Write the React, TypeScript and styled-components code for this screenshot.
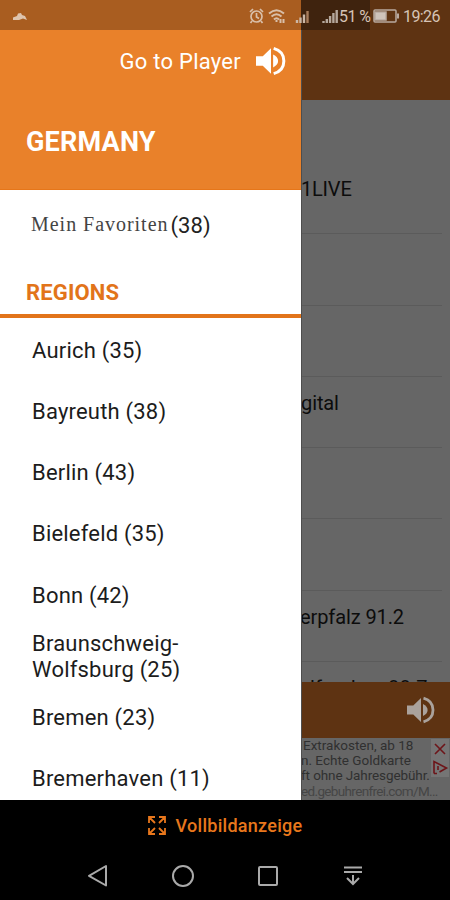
import React from 'react';
import styled, { createGlobalStyle } from 'styled-components';

const Global = createGlobalStyle`
  body { margin: 0; background: #000; font-family: Roboto, "Liberation Sans", sans-serif; }
  * { box-sizing: border-box; }
`;

const Screen = styled.div`
  position: relative;
  width: 450px;
  height: 900px;
  overflow: hidden;
  display: grid;
  grid-template-rows: 800px 52px 48px;
  background: #000;
`;

const StatusBar = styled.div`
  position: absolute;
  top: 0;
  left: 0;
  width: 450px;
  height: 30px;
  display: flex;
  align-items: center;
  padding: 2px 9px 0 12px;
  color: #d6c4b6;
  font-size: 16px;
  background: linear-gradient(90deg, #a95d20 301px, #3f230e 301px, #3f230e 370px, #5e3312 370px);
  svg { display: block; flex: none; }
`;

const Spacer = styled.div`
  flex: 1;
`;

const StatusIcon = styled.svg<{ $gap: number }>`
  margin-right: ${p => p.$gap}px;
`;

const StatusText = styled.span<{ $width: number; $spacing?: number }>`
  width: ${p => p.$width}px;
  letter-spacing: ${p => p.$spacing ?? 0}px;
  white-space: nowrap;
`;

const Main = styled.div`
  display: grid;
  grid-template-columns: 301px 149px;
  min-height: 0;
`;

const Drawer = styled.aside`
  background: #fff;
  overflow: hidden;
`;

const DrawerHeader = styled.header`
  height: 190px;
  padding: 42px 15px 0 26px;
  background: #e9812a;
  border-bottom: 1px solid #e67619;
  color: #fff;
`;

const PlayerLink = styled.div`
  display: flex;
  justify-content: flex-end;
  align-items: center;
  gap: 15px;
  height: 38px;
  font-size: 22px;
  letter-spacing: 0.26px;
`;

const Country = styled.h1`
  margin: 43px 0 0;
  font-size: 27px;
  line-height: 38px;
  font-weight: 700;
  letter-spacing: 0.2px;
`;

const Favorites = styled.div`
  display: flex;
  align-items: center;
  height: 70px;
  padding-left: 31px;
  color: #222;
  font-size: 22px;
  letter-spacing: 0.1px;
`;

const SerifLabel = styled.span`
  font-family: "Liberation Serif", serif;
  font-size: 20px;
  letter-spacing: 0.97px;
  margin: -2px 2px 0 0;
  color: #444;
`;

const SectionTitle = styled.h2`
  height: 58px;
  margin: 0;
  padding: 18px 0 0 26px;
  border-bottom: 4px solid #e2741a;
  color: #e2741a;
  font-size: 22px;
  line-height: 30px;
  font-weight: 700;
  letter-spacing: 0.15px;
`;

const Region = styled.div`
  display: flex;
  align-items: center;
  height: 61.25px;
  width: 240px;
  padding: 4px 0 0 32px;
  font-size: 22px;
  line-height: 26px;
  letter-spacing: 0.2px;
  color: #1c1c1c;
`;

const Backdrop = styled.div`
  display: grid;
  grid-template-rows: 100px 582px 56px 62px;
  overflow: hidden;
  background: #666;
  border-left: 1px solid #4e4e4e;
`;

const AppBar = styled.div`
  background: #5e3312;
`;

const Stations = styled.div`
  padding: 63px 8px 0 0;
  overflow: hidden;
`;

const Station = styled.div`
  height: 71.3px;
  padding-top: 13px;
  border-bottom: 1px solid #5b5b5b;
  font-size: 20px;
  line-height: 26px;
  color: #0c0c0c;
  white-space: nowrap;
`;

const StationName = styled.span<{ $shift: number; $spacing: number }>`
  display: block;
  margin-left: ${p => p.$shift}px;
  letter-spacing: ${p => p.$spacing}px;
`;

const PlayerBar = styled.div`
  display: flex;
  align-items: center;
  justify-content: flex-end;
  padding-right: 15px;
  background: #5e3312;
`;

const Ad = styled.div`
  display: flex;
  justify-content: space-between;
  overflow: hidden;
`;

const AdCopy = styled.div`
  flex: 1;
  min-width: 0;
  font-size: 13.5px;
  line-height: 15.2px;
  white-space: nowrap;
`;

const AdLine = styled.div<{ $shift?: number; $spacing?: number; $muted?: boolean }>`
  margin-left: ${p => p.$shift ?? 0}px;
  letter-spacing: ${p => p.$spacing ?? 0}px;
  color: ${p => (p.$muted ? '#454545' : '#303030')};
`;

const AdControls = styled.div`
  width: 18px;
  height: 38px;
  margin: 1px 1px 0 0;
  background: #757575;
`;

const FullscreenBar = styled.div`
  display: flex;
  justify-content: center;
  align-items: center;
  gap: 10px;
  padding-bottom: 1px;
  color: #e8771c;
  font-size: 18px;
  font-weight: 500;
  letter-spacing: 0.27px;
`;

const NavBar = styled.nav`
  display: grid;
  grid-template-columns: repeat(4, 85px);
  justify-content: center;
  align-items: center;
  justify-items: center;
`;

const Speaker = ({ color, size }: { color: string; size: number }) => (
  <svg width={size} height={size} viewBox="0 0 28 28" fill={color}>
    <path d="M0 9.500h6.300L14 2v24l-7.700-7.500H0z" />
    <path d="M16 8c3 1.600 4.600 3.500 4.600 6S19 18.500 16 20z" />
    <path d="M16.500 2.200C23 4 26 8.600 26 14s-3 10-9.500 11.800" fill="none" stroke={color} strokeWidth="2.800" />
  </svg>
);

const stations = [
  { name: '1LIVE', shift: -1, spacing: -0.2 },
  { name: '', shift: 0, spacing: 0 },
  { name: '', shift: 0, spacing: 0 },
  { name: 'gital', shift: -1, spacing: -0.1 },
  { name: '', shift: 0, spacing: 0 },
  { name: '', shift: 0, spacing: 0 },
  { name: 'erpfalz 91.2', shift: -2, spacing: -0.1 },
  { name: 'lfranken 88.7', shift: 8, spacing: 0.15 },
];

const regions = [
  'Aurich (35)',
  'Bayreuth (38)',
  'Berlin (43)',
  'Bielefeld (35)',
  'Bonn (42)',
  'Braunschweig-Wolfsburg (25)',
  'Bremen (23)',
  'Bremerhaven (11)',
];

export default function App() {
  return (
    <Screen>
      <Global />
      <Main>
        <Drawer>
          <DrawerHeader>
            <PlayerLink>
              <span>Go to Player</span>
              <Speaker color="#fff" size={30} />
            </PlayerLink>
            <Country>GERMANY</Country>
          </DrawerHeader>
          <Favorites>
            <SerifLabel>Mein Favoriten</SerifLabel>
            <span>(38)</span>
          </Favorites>
          <SectionTitle>REGIONS</SectionTitle>
          {regions.map(r => (
            <Region key={r}>{r}</Region>
          ))}
        </Drawer>
        <Backdrop>
          <AppBar />
          <Stations>
            {stations.map((s, i) => (
              <Station key={i}>
                <StationName $shift={s.shift} $spacing={s.spacing}>{s.name}</StationName>
              </Station>
            ))}
          </Stations>
          <PlayerBar>
            <Speaker color="#aaa29c" size={28} />
          </PlayerBar>
          <Ad>
            <AdCopy>
              <AdLine $shift={1}>Extrakosten, ab 18</AdLine>
              <AdLine $shift={-1}>n. Echte Goldkarte</AdLine>
              <AdLine $shift={-1} $spacing={-0.1}>ft ohne Jahresgebühr.</AdLine>
              <AdLine $shift={-1} $spacing={-0.65} $muted>ed.gebuhrenfrei.com/M...</AdLine>
            </AdCopy>
            <AdControls>
              <svg width="18" height="38" fill="none" stroke="#6d1519" strokeWidth="1.600">
                <path d="M4 5l10 10M14 5L4 15" />
                <path d="M3 34.500v-12l12.500 6.500-7 4M3 34.500h3M7 27v4" />
              </svg>
            </AdControls>
          </Ad>
        </Backdrop>
      </Main>
      <FullscreenBar>
        <svg width="18" height="19" viewBox="0 0 18 19" fill="none" stroke="#e8771c" strokeWidth="1.800">
          <path d="M1 7V1h6M1 1l6 6M11 1h6v6M17 1l-6 6M1 12v6h6M1 18l6-6M17 12v6h-6M17 18l-6-6" />
        </svg>
        <span>Vollbildanzeige</span>
      </FullscreenBar>
      <NavBar>
        <svg width="22" height="24" fill="none" stroke="#aaa" strokeWidth="2">
          <path d="M19 2v19.500L2 11.800z" strokeLinejoin="round" />
        </svg>
        <svg width="24" height="24" fill="none" stroke="#aaa" strokeWidth="2">
          <circle cx="12" cy="12" r="10" />
        </svg>
        <svg width="22" height="22" fill="none" stroke="#aaa" strokeWidth="2">
          <rect x="2" y="2" width="18" height="18" rx="1" />
        </svg>
        <svg width="20" height="22" fill="none" stroke="#aaa" strokeWidth="2">
          <path d="M1 2.500h18M1 7h18M10 10v9M4 13l6 6 6-6" />
        </svg>
      </NavBar>
      <StatusBar>
        <svg width="16" height="9" fill="#dec4ae">
          <path d="M1 5.500l4-1.500L6 1.500 9 1l1 2 3 1 2 4-4-1.500L7 8H1z" />
        </svg>
        <Spacer />
        <StatusIcon $gap={4} width="15" height="16" fill="none" stroke="#d9bfa9" strokeWidth="1.700">
          <circle cx="7.500" cy="8.500" r="5.500" />
          <path d="M7.500 5v4l2.500 1.500M1 4l3-3M14 4l-3-3M3 13l-1.500 2M12 13l1.500 2" />
        </StatusIcon>
        <StatusIcon $gap={9} width="18" height="16" fill="none" stroke="#d9bfa9" strokeWidth="2">
          <path d="M1 5.500Q8.500-1 16 5.500M3.500 8.500Q8.500 4 13.500 8.500M6 11.500Q8.500 9 11 11.500M8.500 12v2M12.500 11v4M15.500 11v4" />
        </StatusIcon>
        <StatusIcon $gap={12} width="15" height="16" fill="none" stroke="#cbb7a6" strokeWidth="2.400">
          <path d="M2 15v-3M5.500 15V9.500M9 15V6.500" />
          <path d="M12.500 15V3" stroke="#a87d5c" />
        </StatusIcon>
        <StatusIcon $gap={1} width="16" height="16" fill="none" stroke="#b5a89d" strokeWidth="2.400">
          <path d="M1.500 15v-2M4.800 15v-4M8.100 15V8M11.400 15V5M14.700 15V2" />
        </StatusIcon>
        <StatusText $width={34} $spacing={-0.6}>51 %</StatusText>
        <StatusIcon $gap={4} width="26" height="14" fill="none" stroke="#b9aaa0" strokeWidth="1.500">
          <rect x="1" y="1" width="22" height="12" rx="1" />
          <rect x="2" y="3" width="11" height="8" fill="#cfc3ba" />
          <path d="M25 4.500v5" strokeWidth="2" />
        </StatusIcon>
        <StatusText $width={38} $spacing={-0.6}>19:26</StatusText>
      </StatusBar>
    </Screen>
  );
}
